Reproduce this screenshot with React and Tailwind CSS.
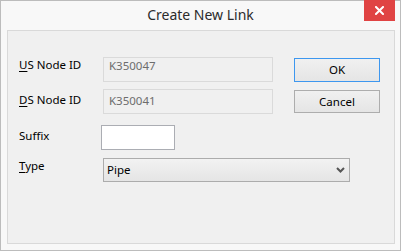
import React from "react";

const font = { fontFamily: '"Noto Sans", "Segoe UI", sans-serif' };

function Label({ children, className = "" }) {
    return (
        <div className={`shrink-0 text-[11.5px] leading-[16px] text-black ${className}`}>{children}</div>
    );
}

export default function App() {
    return (
        <div className="w-[401px] h-[251px] border border-[#bcbcbc] bg-[#f8f8f8] flex flex-col font-['Noto_Sans',sans-serif]">
            {/* Title bar */}
            <div className="relative h-[29px] shrink-0 flex items-center justify-center">
                <span className="text-[14px] leading-[18px] text-[#2b2b2b] -mt-[2px]">Create New Link</span>
                <button className="absolute -top-[1px] right-[5px] w-[31px] h-[21px] bg-[#e04343] flex items-center justify-center">
                    <svg width="9" height="9" viewBox="0 0 9 9">
                        <path d="M1 1 L8 8 M8 1 L1 8" stroke="#ffffff" strokeWidth="2" strokeLinecap="square" fill="none" />
                    </svg>
                </button>
            </div>

            {/* Body panel */}
            <div className="ml-[6px] mr-[5px] mb-[6px] flex-1 border border-[#d9d9d9] bg-[#f0f0f0] pt-[26px] pl-[11px]">
                {/* US Node ID */}
                <div className="flex items-start h-[25px]">
                    <Label className="w-[84px]"><span className="underline underline-offset-2">U</span>S Node ID</Label>
                    <div className="w-[170px] h-[25px] border border-[#dadada] bg-[#f0f0f0] pl-[5px] text-[11.5px] leading-[16px] text-[#6d6d6d]">K350047</div>
                    <button className="ml-[21px] mt-[1px] w-[86px] h-[24px] border border-[#3d97ef] bg-gradient-to-b from-[#f0f0f0] to-[#e5e5e5] text-[11.5px] leading-[16px] text-black">OK</button>
                </div>

                {/* DS Node ID */}
                <div className="flex items-start h-[25px] mt-[7px]">
                    <Label className="w-[84px] mt-[3px]"><span className="underline underline-offset-2">D</span>S Node ID</Label>
                    <div className="w-[170px] h-[25px] border border-[#dadada] bg-[#f0f0f0] pl-[5px] pt-[3px] text-[11.5px] leading-[16px] text-[#6d6d6d]">K350041</div>
                    <button className="ml-[21px] mt-[1px] w-[86px] h-[23px] border border-[#adadad] bg-gradient-to-b from-[#f0f0f0] to-[#e5e5e5] text-[11.5px] leading-[16px] text-black">Cancel</button>
                </div>

                {/* Suffix */}
                <div className="flex items-start h-[25px] mt-[11px]">
                    <Label className="w-[82px] mt-[3px]">Suffix</Label>
                    <div className="w-[74px] h-[25px] border border-[#abadb3] bg-white"></div>
                </div>

                {/* Type */}
                <div className="flex items-start h-[24px] mt-[8px]">
                    <Label className="w-[84px]"><span className="underline underline-offset-2">T</span>ype</Label>
                    <div className="w-[247px] h-[24px] border border-[#acacac] bg-gradient-to-b from-[#f2f2f2] to-[#e5e5e5] flex items-center justify-between pl-[3px] pr-[4px]">
                        <span className="text-[11.5px] leading-[16px] text-black">Pipe</span>
                        <svg width="9" height="6" viewBox="0 0 9 6">
                            <path d="M1 1 L4.5 4.5 L8 1" stroke="#555555" strokeWidth="2" fill="none" />
                        </svg>
                    </div>
                </div>
            </div>
        </div>
    );
}
